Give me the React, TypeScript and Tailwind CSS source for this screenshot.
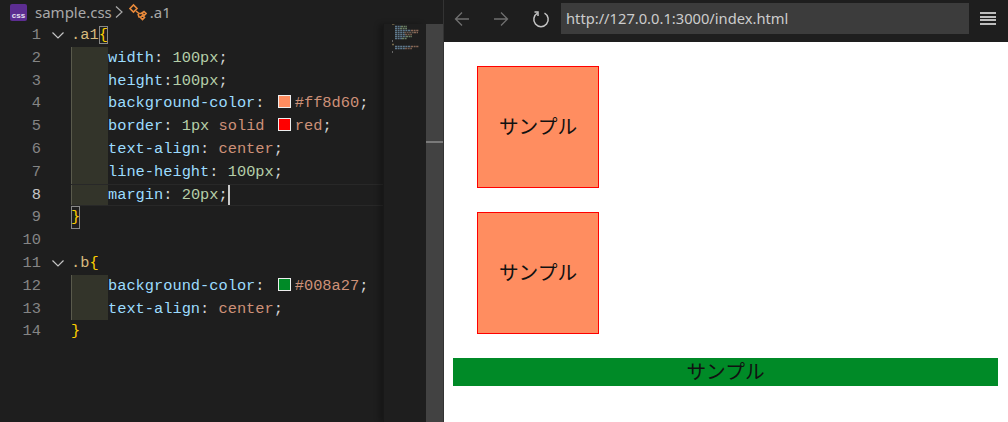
import React from "react";

type Tok = [string, string];
const P = "text-[#d4d4d4]";
const K = "text-[#9cdcfe]";
const N = "text-[#b5cea8]";
const V = "text-[#ce9178]";

function Swatch({ color }: { color: string }) {
  return <span className="inline-block w-[13px] h-[13px] border border-[#eeeeee] mr-[4px] ml-[4px] align-[-1px]" style={{ backgroundColor: color }} />;
}

function Decl({ parts }: { parts: React.ReactNode }) {
  return (
    <>
      <span className="inline-block w-[37px] h-full bg-[#33342a] border-l border-[#5a5a4c] shrink-0" />
      <span className="whitespace-pre">{parts}</span>
    </>
  );
}

function t(toks: Tok[]) {
  return toks.map(([c, s], i) => <span key={i} className={c}>{s}</span>);
}

const brace = "text-[#ffd000]";

const lines: { n: number; fold?: boolean; active?: boolean; body: React.ReactNode }[] = [
  { n: 1, fold: true, body: <span className="whitespace-pre"><span className="text-[#d7ba7d]">.a1</span><span className={`${brace} outline outline-1 outline-[#888888] -outline-offset-1`}>{"{"}</span></span> },
  { n: 2, body: <Decl parts={t([[K, "width"], [P, ": "], [N, "100px"], [P, ";"]])} /> },
  { n: 3, body: <Decl parts={t([[K, "height"], [P, ":"], [N, "100px"], [P, ";"]])} /> },
  { n: 4, body: <Decl parts={<>{t([[K, "background-color"], [P, ": "]])}<Swatch color="#ff8d60" />{t([[V, "#ff8d60"], [P, ";"]])}</>} /> },
  { n: 5, body: <Decl parts={<>{t([[K, "border"], [P, ": "], [N, "1px"], [P, " "], [V, "solid"], [P, " "]])}<Swatch color="#ff0000" />{t([[V, "red"], [P, ";"]])}</>} /> },
  { n: 6, body: <Decl parts={t([[K, "text-align"], [P, ": "], [V, "center"], [P, ";"]])} /> },
  { n: 7, body: <Decl parts={t([[K, "line-height"], [P, ": "], [N, "100px"], [P, ";"]])} /> },
  { n: 8, active: true, body: <Decl parts={<>{t([[K, "margin"], [P, ": "], [N, "20px"], [P, ";"]])}<span className="inline-block w-[2px] h-[20px] bg-[#c8c8c8] align-top" /></>} /> },
  { n: 9, body: <span className={`${brace} outline outline-1 outline-[#888888] -outline-offset-1 whitespace-pre`}>{"}"}</span> },
  { n: 10, body: null },
  { n: 11, fold: true, body: <span className="whitespace-pre"><span className="text-[#d7ba7d]">.b</span><span className={brace}>{"{"}</span></span> },
  { n: 12, body: <Decl parts={<>{t([[K, "background-color"], [P, ": "]])}<Swatch color="#008a27" />{t([[V, "#008a27"], [P, ";"]])}</>} /> },
  { n: 13, body: <Decl parts={t([[K, "text-align"], [P, ": "], [V, "center"], [P, ";"]])} /> },
  { n: 14, body: <span className={brace}>{"}"}</span> },
];

function CodeLine({ l }: { l: (typeof lines)[number] }) {
  return (
    <div className="flex h-[22.8px] items-stretch leading-[22.8px]">
      <span className={`w-[41px] text-right shrink-0 ${l.active ? "text-[#c6c6c6]" : "text-[#858585]"}`}>{l.n}</span>
      <span className="w-[30px] shrink-0 flex items-center pl-[10px]">
        {l.fold && (
          <svg width="14" height="14" viewBox="0 0 14 14" fill="none" stroke="#c5c5c5" strokeWidth="1.2">
            <path d="M1.5 4.5 L7 10 L12.5 4.5" />
          </svg>
        )}
      </span>
      <span className={`flex-1 flex items-stretch ${l.active ? "border-y border-[#282828] leading-[20.8px]" : ""}`}>{l.body}</span>
    </div>
  );
}

function Minimap() {
  const rows: [number, number, number, string][] = [
    [0, 0, 3, "#8f7f55"],
    [2.5, 3, 6, "#6f8fa8"], [2.5, 9, 6, "#7f9a78"],
    [4.5, 3, 5, "#6f8fa8"], [4.5, 8, 7, "#7f9a78"],
    [6.5, 3, 16, "#6f8fa8"], [6.5, 19, 8, "#a07a64"],
    [8.5, 3, 9, "#6f8fa8"], [8.5, 12, 10, "#7a6a5c"], [8.5, 22, 4, "#a07a64"],
    [10.5, 3, 10, "#6f8fa8"], [10.5, 13, 7, "#8a6a58"],
    [12.5, 3, 11, "#6f8fa8"], [12.5, 14, 6, "#7f9a78"],
    [14.5, 3, 7, "#6f8fa8"], [14.5, 10, 5, "#7f9a78"],
    [20.5, 0, 2, "#8f7f55"],
    [22.5, 3, 16, "#6f8fa8"], [22.5, 19, 8, "#a07a64"],
    [24.5, 3, 10, "#6f8fa8"], [24.5, 13, 7, "#8a6a58"],
  ];
  return (
    <svg width="32" height="30" viewBox="0 0 32 30" className="block mt-[0px] ml-[8px]">
      {rows.map(([y, x, w, c], i) => (
        <line key={i} x1={x} x2={x + w} y1={y} y2={y} stroke={c} strokeWidth="1.5" strokeDasharray="2 0.6" opacity="0.8" />
      ))}
      <rect x="0" y="16" width="1" height="2" fill="#666" />
      <rect x="0" y="27" width="1" height="2" fill="#666" />
    </svg>
  );
}

function Box() {
  return (
    <div className="w-[122px] h-[122px] bg-[#ff8d60] border border-[#ff0000] flex items-center justify-center text-[19.7px] text-[#111] pb-[2px]">
      サンプル
    </div>
  );
}

export default function App() {
  return (
    <div className="flex w-[1008px] h-[422px] overflow-hidden bg-white">
      <div className="w-[444px] h-full bg-[#1e1e1e] flex flex-col shrink-0 border-r border-[#333333]">
        <div className="h-[24px] flex items-center pl-[10px] text-[15px] text-[#a9a9a9] font-['Noto_Sans','sans-serif'] shrink-0">
          <span className="w-[17px] h-[17px] bg-[#5c2d91] rounded-[2px] flex items-end justify-center text-[8px] leading-[10px] font-bold text-[#e6e0f0] font-['Liberation_Sans',sans-serif]">css</span>
          <span className="ml-[8px]">sample.css</span>
          <svg width="10" height="14" viewBox="0 0 10 14" fill="none" stroke="#a9a9a9" strokeWidth="1.2" className="ml-[2px]">
            <path d="M2 1.5 L8 7 L2 12.5" />
          </svg>
          <svg width="18" height="18" viewBox="0 0 18 18" fill="none" stroke="#e8893a" strokeWidth="1.6" className="ml-[5px]">
            <path d="M1 5.5 L4.5 2 L8 5.5 L4.5 9 Z" />
            <path d="M7 8 L10 10.5 H13" />
            <path d="M9 11 L10 14 H12" />
            <path d="M13 10 L15 8.5 L17 10.5 L15 12.5 Z" />
            <path d="M11.5 14.5 L13.5 12.5 L15.5 14.5 L13.5 16.5 Z" />
          </svg>
          <span className="ml-[3px]">.a1</span>
        </div>
        <div className="flex-1 flex min-h-0">
          <div className="w-[383px] font-['Liberation_Mono',monospace] text-[15.35px] shrink-0">
            {lines.map((l) => <CodeLine key={l.n} l={l} />)}
          </div>
          <div className="w-[43px] border-l border-[#181818] shadow-[-4px_0_5px_rgba(0,0,0,0.25)] shrink-0">
            <Minimap />
          </div>
          <div className="w-[17px] bg-[#424242] pt-[117px] shrink-0">
            <div className="h-[2px] bg-[#7a7a7a]" />
          </div>
        </div>
      </div>
      <div className="flex-1 flex flex-col min-w-0">
        <div className="h-[42px] bg-[#1e1e1e] flex items-start shrink-0 pt-[3px]">
          <div className="w-[35px] h-[31px] flex items-center justify-center shrink-0">
            <svg width="16" height="16" viewBox="0 0 16 16" fill="none" stroke="#6f6f6f" strokeWidth="1.3"><path d="M15 8 H1.5 M8 1.5 L1.5 8 L8 14.5" /></svg>
          </div>
          <div className="w-[44px] h-[31px] flex items-center justify-center shrink-0">
            <svg width="16" height="16" viewBox="0 0 16 16" fill="none" stroke="#6f6f6f" strokeWidth="1.3"><path d="M1 8 H14.5 M8 1.5 L14.5 8 L8 14.5" /></svg>
          </div>
          <div className="w-[36px] h-[31px] flex items-center justify-center shrink-0">
            <svg width="18" height="18" viewBox="0 0 18 18" fill="none" stroke="#c5c5c5" strokeWidth="1.5"><path d="M5.5 3.2 A7.2 7.2 0 1 0 12.5 3.2" /><path d="M2.5 2 L6 2 L6 6" /></svg>
          </div>
          <div className="w-[408px] h-[31px] ml-[2px] bg-[#3c3c3c] flex items-center pl-[5px] text-[14.7px] text-[#cccccc] font-['Noto_Sans',sans-serif] shrink-0">
            http://127.0.0.1:3000/index.html
          </div>
          <div className="flex-1 h-[31px] flex flex-col justify-center pl-[11px] gap-[1.7px]">
            <div className="w-[16px] h-[2px] bg-[#bdbdbd]" />
            <div className="w-[16px] h-[2px] bg-[#bdbdbd]" />
            <div className="w-[16px] h-[2px] bg-[#bdbdbd]" />
            <div className="w-[16px] h-[2px] bg-[#bdbdbd]" />
          </div>
        </div>
        <div className="flex-1 bg-white pt-[24px] pl-[9px] pr-[10px] font-['Noto_Sans_CJK_JP',sans-serif]">
          <div className="ml-[24px]"><Box /></div>
          <div className="ml-[24px] mt-[24px]"><Box /></div>
          <div className="mt-[24px] h-[28px] bg-[#008a27] flex items-center justify-center text-[19.7px] text-[#111] pb-[2px]">サンプル</div>
        </div>
      </div>
    </div>
  );
}
